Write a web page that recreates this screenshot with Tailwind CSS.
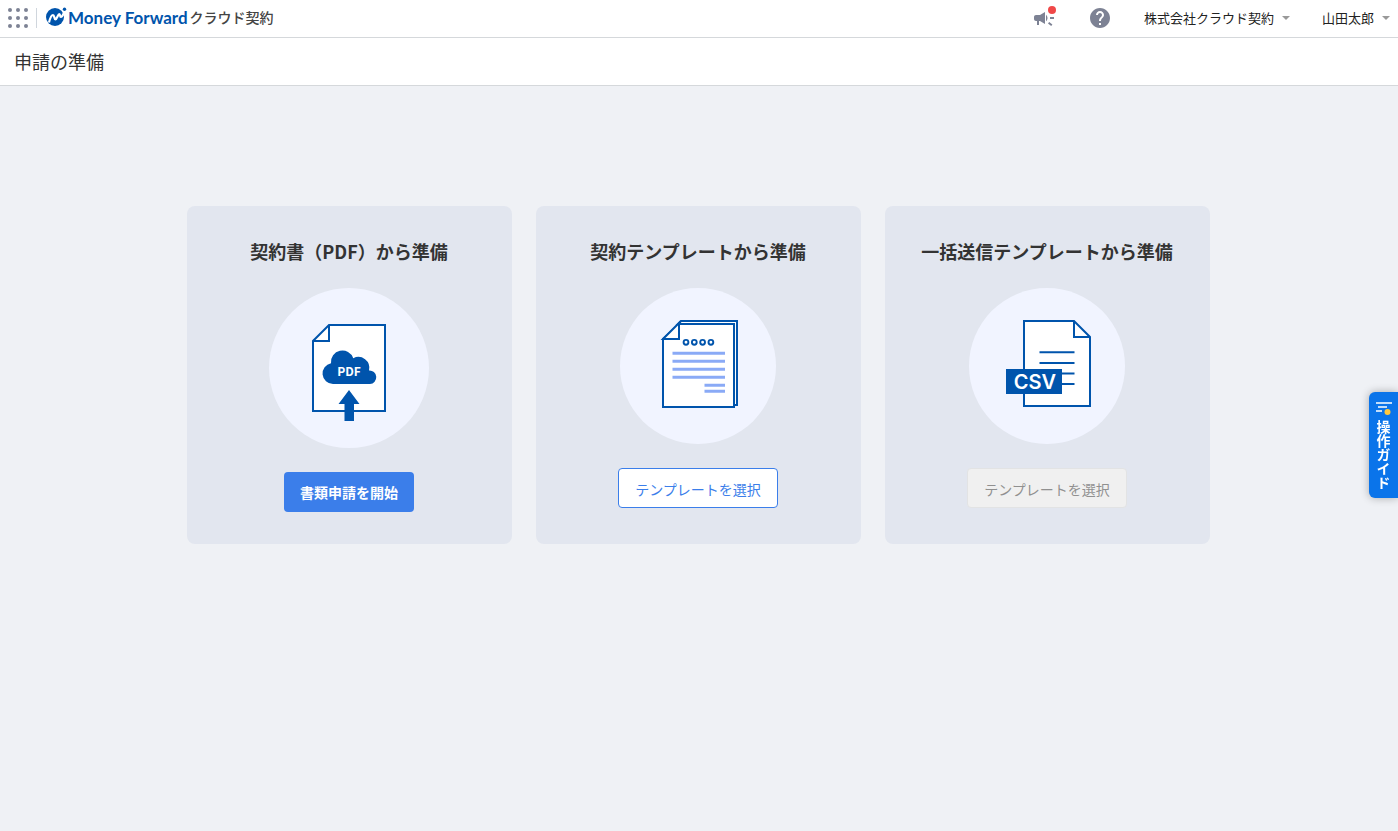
<!DOCTYPE html>
<html lang="ja">
<head>
<meta charset="utf-8">
<meta name="viewport" content="width=device-width, initial-scale=1">
<title>申請の準備</title>
<script src="https://cdn.jsdelivr.net/npm/@tailwindcss/browser@4"></script>
</head>
<body class="flex min-h-screen flex-col bg-[#eff1f5] font-['Noto_Sans_CJK_JP',sans-serif] text-[#333333]">
<header class="flex h-[38px] shrink-0 items-center border-b border-[#d5d8db] bg-white px-2 pb-px">
  <button type="button" aria-label="サービス一覧" class="shrink-0">
    <svg class="block size-5" viewBox="0 0 20 20" fill="#7d8294"><circle cx="2" cy="2" r="2"/><circle cx="10" cy="2" r="2"/><circle cx="18" cy="2" r="2"/><circle cx="2" cy="10" r="2"/><circle cx="10" cy="10" r="2"/><circle cx="18" cy="10" r="2"/><circle cx="2" cy="18" r="2"/><circle cx="10" cy="18" r="2"/><circle cx="18" cy="18" r="2"/></svg>
  </button>
  <span class="ml-2 h-5 w-px bg-[#d0d6dd]"></span>
  <a href="#" class="ml-2 flex items-center pb-0.5 leading-none whitespace-nowrap">
    <svg class="block size-[22px]" viewBox="0 0 22 22"><circle cx="10" cy="11" r="9" fill="#0054ac"/><circle cx="19.500" cy="3.300" r="1.700" fill="#0054ac"/><path d="M4 16.500C5 12.500 6.500 9 8 9s1.200 4.500 2.500 4.500S13 8 14.300 8s.2 3 1.500 3S18.500 8 19.500 5.500" fill="none" stroke="#fff" stroke-width="2.200" stroke-linejoin="round"/></svg>
    <span class="ml-px font-['Lato'] text-[17px] font-bold text-[#0054ac]">Money Forward</span>
    <span class="ml-0.5 text-[14px] font-medium text-[#444444]">クラウド契約</span>
  </a>
  <div class="ml-auto flex items-center text-[13px] whitespace-nowrap text-[#222222]">
    <button type="button" aria-label="お知らせ" class="mr-8">
      <svg class="block size-6" viewBox="0 0 24 24"><path d="M18 11v2h4v-2h-4zm-2 6.610c.96.71 2.210 1.650 3.200 2.390.4-.53.8-1.070 1.200-1.600-.99-.74-2.240-1.680-3.200-2.400-.4.540-.8 1.080-1.200 1.610zM4 9c-1.100 0-2 .9-2 2v2c0 1.100.9 2 2 2h1v4h2v-4h1l5 3V6L8 9H4zm11.500 3c0-1.330-.58-2.530-1.500-3.350v6.690c.92-.81 1.500-2.010 1.500-3.340z" fill="#7d8294"/><circle cx="20" cy="4" r="4" fill="#f04848"/></svg>
    </button>
    <button type="button" aria-label="ヘルプ" class="mr-8">
      <svg class="block size-6" viewBox="0 0 24 24" fill="#7d8294"><path d="M12 2C6.480 2 2 6.480 2 12s4.480 10 10 10 10-4.480 10-10S17.520 2 12 2zm1 17h-2v-2h2v2zm2.070-7.750l-.9.920C13.450 12.900 13 13.500 13 15h-2v-.5c0-1.100.45-2.100 1.170-2.830l1.240-1.260c.37-.36.59-.86.59-1.410 0-1.100-.9-2-2-2s-2 .9-2 2H8c0-2.210 1.790-4 4-4s4 1.790 4 4c0 .88-.36 1.680-.93 2.250z"/></svg>
    </button>
    <button type="button" class="mr-8 flex items-center gap-2 pb-px">株式会社クラウド契約<svg class="block h-1 w-2" viewBox="0 0 8 4"><path d="M0 0h8L4 4z" fill="#999999"/></svg></button>
    <button type="button" class="flex items-center gap-2 pb-px">山田太郎<svg class="block h-1 w-2" viewBox="0 0 8 4"><path d="M0 0h8L4 4z" fill="#999999"/></svg></button>
  </div>
</header>
<div class="flex h-12 shrink-0 items-center border-b border-[#d5d8db] bg-white px-[14px]">
  <h1 class="text-[18px]">申請の準備</h1>
</div>
<main class="mx-auto grid w-full max-w-[1024px] grid-cols-3 gap-6 pt-[120px] pr-px pb-8">
  <section class="flex flex-col items-center rounded-lg bg-[#e2e6ef] py-8 pr-px">
    <h2 class="text-[18px] leading-[26px] font-bold whitespace-nowrap">契約書（PDF）から準備</h2>
    <svg class="mt-6 block size-40" viewBox="0 0 160 160">
      <circle cx="80" cy="80" r="80" fill="#f1f4ff"/>
      <path d="M60 37h56v86H44V53z" fill="#fff" stroke="#0054ac" stroke-width="2"/>
      <path d="M60 37v16H44" fill="none" stroke="#0054ac" stroke-width="2"/>
      <path d="M64 96a10.500 10.500 0 0 1-2-20.800A11.500 11.500 0 0 1 84.300 70.200A11 11 0 0 1 100 82.500A6.400 6.400 0 1 1 101 96z" fill="#0054ac"/>
      <text x="80" y="88" text-anchor="middle" font-size="12" font-weight="700" fill="#fff" font-family="Noto Sans CJK JP, sans-serif">PDF</text>
      <path d="M80 102 90.500 116H85v17h-9.500v-17H69.500z" fill="#0054ac"/>
    </svg>
    <button type="button" class="mt-6 h-10 rounded bg-[#3b7eea] px-4 text-[14px] font-bold whitespace-nowrap text-white">書類申請を開始</button>
  </section>
  <section class="flex flex-col items-center rounded-lg bg-[#e2e6ef] py-8 pr-px">
    <h2 class="text-[18px] leading-[26px] font-bold whitespace-nowrap">契約テンプレートから準備</h2>
    <svg class="mt-6 block size-[156px]" viewBox="0 0 156 156">
      <circle cx="78" cy="78" r="78" fill="#f1f4ff"/>
      <path d="M61 33h56v84H106V36H58z" fill="#fff" stroke="#0054ac" stroke-width="2"/>
      <path d="M59 36h55v83H43V51z" fill="#fff" stroke="#0054ac" stroke-width="2"/>
      <path d="M61 33 43 51H59V36" fill="#fff" stroke="#0054ac" stroke-width="2"/>
      <g fill="none" stroke="#0054ac" stroke-width="1.900"><circle cx="66" cy="54.300" r="2.400"/><circle cx="74.300" cy="54.300" r="2.400"/><circle cx="82.600" cy="54.300" r="2.400"/><circle cx="90.900" cy="54.300" r="2.400"/></g>
      <path d="M52.500 65.300h52.500M52.500 73.300h52.500M52.500 81.300h52.500M52.500 89.300h52.500M84.500 97.300h20.500M84.500 103.300h20.500" stroke="#8aaaf6" stroke-width="3"/>
    </svg>
    <button type="button" class="mt-6 h-10 rounded border border-[#3b7eea] bg-white px-4 pt-0.5 text-[14px] whitespace-nowrap text-[#3b7eea]">テンプレートを選択</button>
  </section>
  <section class="flex flex-col items-center rounded-lg bg-[#e2e6ef] py-8 pr-px">
    <h2 class="text-[18px] leading-[26px] font-bold whitespace-nowrap">一括送信テンプレートから準備</h2>
    <svg class="mt-6 block size-[156px]" viewBox="0 0 156 156">
      <circle cx="78" cy="78" r="78" fill="#f1f4ff"/>
      <path d="M55 33h50l16 16v69H55z" fill="#fff" stroke="#0054ac" stroke-width="2"/>
      <path d="M105 33v16h16M70.500 64.300H105.500M70.500 75H105.500M90 85.500h15.500M90 96h15.500" fill="none" stroke="#0054ac" stroke-width="2"/>
      <path d="M37 81h56v25H37z" fill="#0054ac"/>
      <text x="66" y="101" text-anchor="middle" font-size="20" font-weight="600" fill="#fff" font-family="Inter, Liberation Sans, sans-serif">CSV</text>
    </svg>
    <button type="button" disabled class="mt-6 h-10 rounded border border-[#e2e3e4] bg-[#f0f0f0] px-4 pt-0.5 text-[14px] whitespace-nowrap text-[#909090]">テンプレートを選択</button>
  </section>
</main>
<button type="button" class="fixed top-[392px] right-0 flex h-[106px] w-[29px] flex-col items-center gap-1 rounded-l-md bg-[#0a74ea] pt-[10px] text-[14px] leading-none font-bold text-white shadow-[0_0_8px_rgba(0,0,0,0.3)]">
  <svg class="block h-[14px] w-4 shrink-0" viewBox="0 0 16 14"><path d="M0 1h16M2 5h9M0 9h6" stroke="#fff" stroke-width="1.600"/><circle cx="11.500" cy="10" r="3" fill="#ffc83d"/></svg>
  <span class="[writing-mode:vertical-rl]">操作ガイド</span>
</button>
</body>
</html>
